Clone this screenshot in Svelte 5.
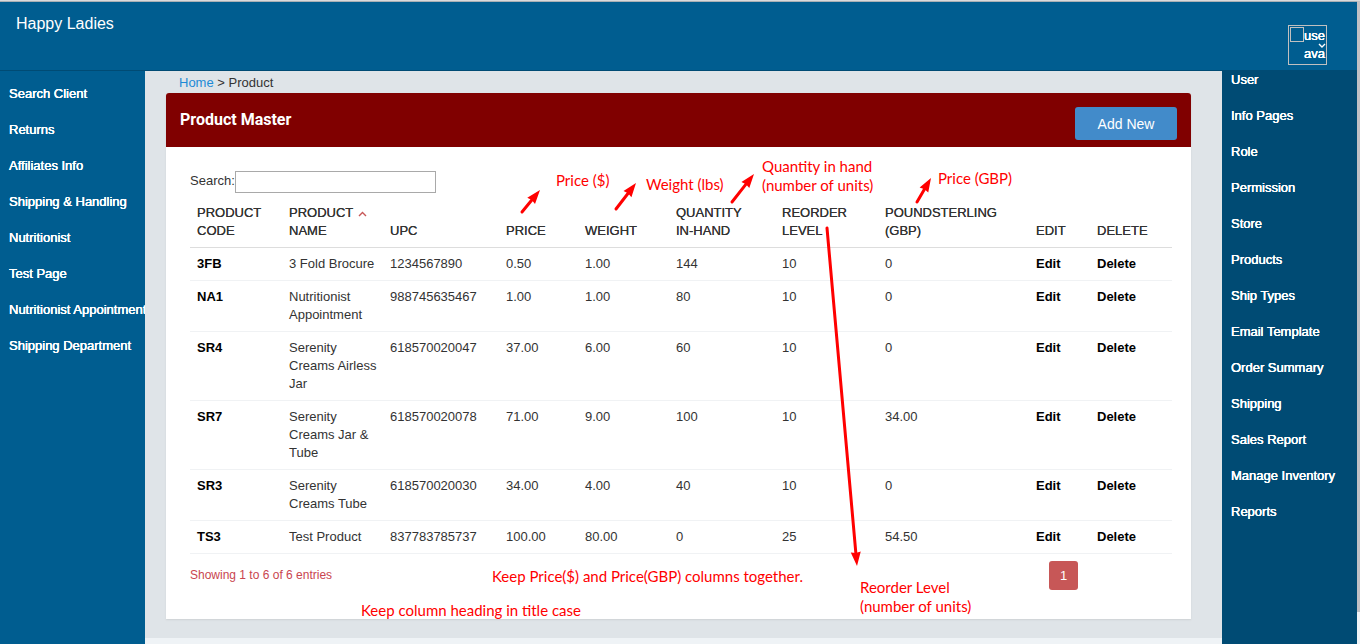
<script>
  const leftLinks = [
    'Search Client',
    'Returns',
    'Affiliates Info',
    'Shipping & Handling',
    'Nutritionist',
    'Test Page',
    'Nutritionist Appointment',
    'Shipping Department',
  ];

  const rightLinks = [
    'User',
    'Info Pages',
    'Role',
    'Permission',
    'Store',
    'Products',
    'Ship Types',
    'Email Template',
    'Order Summary',
    'Shipping',
    'Sales Report',
    'Manage Inventory',
    'Reports',
  ];

  const columns = [
    { lines: ['PRODUCT', 'CODE'], width: 92 },
    { lines: ['PRODUCT', 'NAME'], width: 101, sorted: true },
    { lines: ['UPC'], width: 116 },
    { lines: ['PRICE'], width: 79 },
    { lines: ['WEIGHT'], width: 91 },
    { lines: ['QUANTITY', 'IN-HAND'], width: 106 },
    { lines: ['REORDER', 'LEVEL'], width: 103 },
    { lines: ['POUNDSTERLING', '(GBP)'], width: 151 },
    { lines: ['EDIT'], width: 61 },
    { lines: ['DELETE'], width: 82 },
  ];

  const products = [
    ['3FB', '3 Fold Brocure', '1234567890', '0.50', '1.00', '144', '10', '0'],
    ['NA1', 'Nutritionist Appointment', '988745635467', '1.00', '1.00', '80', '10', '0'],
    ['SR4', 'Serenity Creams Airless Jar', '618570020047', '37.00', '6.00', '60', '10', '0'],
    ['SR7', 'Serenity Creams Jar & Tube', '618570020078', '71.00', '9.00', '100', '10', '34.00'],
    ['SR3', 'Serenity Creams Tube', '618570020030', '34.00', '4.00', '40', '10', '0'],
    ['TS3', 'Test Product', '837783785737', '100.00', '80.00', '0', '25', '54.50'],
  ];

  // Review notes, placed from the card's top left corner.
  const notes = [
    { x: 390, y: 78, lines: ['Price ($)'] },
    { x: 480, y: 82, lines: ['Weight (lbs)'] },
    { x: 596, y: 64, lines: ['Quantity in hand', '(number of units)'] },
    { x: 772, y: 76, lines: ['Price (GBP)'] },
    { x: 326, y: 474, lines: ['Keep Price($) and Price(GBP) columns together.'] },
    { x: 195, y: 508, lines: ['Keep column heading in title case'] },
    { x: 694, y: 485, lines: ['Reorder Level', '(number of units)'] },
  ];

  const arrows = [
    [356, 119, 374, 97],
    [450, 116, 470, 90],
    [566, 109, 588, 81],
    [751, 109, 765, 85],
    [661, 135, 691, 473],
  ];

  // Splits an arrow into its shaft's end and the outline of its head.
  function arrowShape([x1, y1, x2, y2]) {
    const length = Math.hypot(x2 - x1, y2 - y1);
    const ux = (x2 - x1) / length;
    const uy = (y2 - y1) / length;
    const point = (back, side) => [x2 - ux * back - uy * side, y2 - uy * back + ux * side];
    return {
      end: point(11, 0),
      head: [point(0, 0), point(14, 5), point(13, 0), point(14, -5)].join(' '),
    };
  }

  const shapes = arrows.map((arrow) => ({ start: arrow, ...arrowShape(arrow) }));

  let search = $state('');
</script>

<div class="page">
  <header class="topbar">
    <a class="brand" href="#home">Happy Ladies</a>
    <button class="avatar" aria-label="Account menu">
      <span class="missing"></span>
      <span class="alt">use<br />ava</span>
      <svg class="caret" width="8" height="6" viewBox="0 0 8 6"><path d="M1 1 4 4 7 1" /></svg>
    </button>
  </header>

  <div class="body">
    <nav class="side left">
      {#each leftLinks as link}
        <a href="#menu">{link}</a>
      {/each}
    </nav>

    <div class="center">
      <main>
        <div class="crumbs"><a href="#home">Home</a> &gt; Product</div>

        <section class="card">
          <div class="title">
            <h1>Product Master</h1>
            <button class="add">Add New</button>
          </div>

          <div class="content">
            <div class="search">
              <label for="search">Search:</label>
              <input id="search" type="text" bind:value={search} />
            </div>

            <table>
              <colgroup>
                {#each columns as column}
                  <col style="width: {column.width}px" />
                {/each}
              </colgroup>
              <thead>
                <tr>
                  {#each columns as column}
                    <th>
                      {column.lines[0]}{#if column.sorted}<svg class="sort" width="9" height="6" viewBox="0 0 9 6"><path d="M1 5 4.500 1.500 8 5" /></svg>{/if}
                      {#if column.lines[1]}<br />{column.lines[1]}{/if}
                    </th>
                  {/each}
                </tr>
              </thead>
              <tbody>
                {#each products as product}
                  <tr>
                    {#each product as value, i}
                      <td class:strong={i === 0}>{value}</td>
                    {/each}
                    <td class="strong"><a href="#edit">Edit</a></td>
                    <td class="strong"><a href="#delete">Delete</a></td>
                  </tr>
                {/each}
              </tbody>
            </table>

            <div class="foot">
              <span class="count">Showing 1 to 6 of 6 entries</span>
              <button class="pageno">1</button>
            </div>
          </div>

          <svg class="arrows" width="1025" height="526" viewBox="0 0 1025 526">
            {#each shapes as shape}
              <line x1={shape.start[0]} y1={shape.start[1]} x2={shape.end[0]} y2={shape.end[1]} />
              <polygon points={shape.head} />
            {/each}
          </svg>
          {#each notes as note}
            <p class="note" style="left: {note.x}px; top: {note.y}px">
              {note.lines[0]}{#if note.lines[1]}<br />{note.lines[1]}{/if}
            </p>
          {/each}
        </section>
      </main>
    </div>

    <nav class="side right">
      {#each rightLinks as link}
        <a href="#menu">{link}</a>
      {/each}
    </nav>
  </div>
  <div class="scroll"></div>
</div>

<style>
  :global(body) {
    margin: 0;
  }

  .page {
    position: relative;
    display: flex;
    flex-direction: column;
    box-sizing: border-box;
    min-height: 100vh;
    padding-right: 3px;
    border-top: 1px solid #d9dadc;
    background: #eff3f6;
    color: #333;
    font: 13px/18px 'Liberation Sans', Arial, sans-serif;
  }

  a {
    color: inherit;
    text-decoration: none;
  }

  button {
    padding: 0;
    border: 0;
    font: inherit;
    cursor: pointer;
  }

  .topbar {
    display: flex;
    justify-content: space-between;
    align-items: flex-start;
    box-sizing: border-box;
    height: 70px;
    padding: 12px 30px 0 16px;
    border-top: 1px solid #a9b0b5;
    border-bottom: 1px solid #004b74;
    background: #005d90;
    color: #fff;
  }

  .brand {
    font-size: 16px;
    line-height: 20px;
  }

  .avatar {
    position: relative;
    display: flex;
    box-sizing: border-box;
    width: 39px;
    height: 40px;
    margin-top: 11px;
    padding: 1px;
    overflow: hidden;
    border: 1px solid #c0c0c0;
    background: none;
    color: #fff;
    text-align: left;
    text-shadow: 0 0 0 currentColor, 0 0 0 currentColor;
  }

  .missing {
    flex: none;
    box-sizing: border-box;
    width: 14px;
    height: 15px;
    border: 1px solid #c0c0c0;
  }

  .caret {
    position: absolute;
    right: 0;
    top: 17px;
    fill: none;
    stroke: #fff;
    stroke-width: 1.4;
  }

  .body {
    display: flex;
    flex: 1;
  }

  .side {
    display: flex;
    flex-direction: column;
    flex: none;
    gap: 18px;
    box-sizing: border-box;
    padding-left: 9px;
    background: #005d90;
    color: #fff;
    white-space: nowrap;
    text-shadow: 0 0 0 currentColor, 0 0 0 currentColor;
  }

  .left {
    width: 145px;
    padding-top: 14px;
    overflow: hidden;
  }

  .right {
    width: 135px;
    background: #004b74;
  }

  .center {
    flex: 1;
    min-width: 0;
  }

  main {
    padding: 0 31px 19px 21px;
    background: #dfe4e8;
  }

  .crumbs {
    padding: 3px 0 1px 13px;
  }

  .crumbs a {
    color: #1d8ad6;
  }

  .card {
    position: relative;
    border-radius: 3px 3px 0 0;
    background: #fff;
    box-shadow: 0 1px 2px #cdd1d4;
  }

  .title {
    display: flex;
    justify-content: space-between;
    align-items: flex-start;
    padding: 14px 14px 7px;
    border-radius: 3px 3px 0 0;
    background: #800000;
    color: #fff;
  }

  h1 {
    margin: 0;
    font: 700 16px/26px Roboto, sans-serif;
  }

  .add {
    width: 102px;
    height: 33px;
    border-radius: 3px;
    background: #428bca;
    color: #fff;
    font-size: 14px;
  }

  .content {
    padding: 24px 19px 29px 24px;
  }

  .search {
    display: flex;
    align-items: flex-start;
  }

  .search label {
    line-height: 20px;
  }

  .search input {
    box-sizing: border-box;
    width: 201px;
    height: 22px;
    padding: 1px 4px;
    border: 1px solid #a9a9a9;
    background: #fff;
    font: inherit;
  }

  table {
    width: 100%;
    margin-top: 3px;
    border-collapse: separate;
    border-spacing: 0;
    table-layout: fixed;
  }

  th,
  td {
    padding: 7px 2px 7px 7px;
    text-align: left;
    vertical-align: top;
  }

  th {
    padding-top: 8px;
    border-bottom: 1px solid #ddd;
    font-weight: 400;
    vertical-align: bottom;
    text-shadow: 0 0 0 currentColor;
    white-space: nowrap;
  }

  td {
    border-bottom: 1px solid #f0f2f4;
  }

  .strong {
    color: #000;
    font-weight: 700;
  }

  .sort {
    margin-left: 5px;
    fill: none;
    stroke: #c75757;
    stroke-width: 1.4;
  }

  .foot {
    display: flex;
    justify-content: space-between;
    align-items: flex-start;
    padding: 7px 94px 0 0;
  }

  .count {
    padding-top: 5px;
    color: #c9454f;
    font-size: 12px;
  }

  .pageno {
    width: 29px;
    height: 29px;
    border-radius: 3px;
    background: #c75757;
    color: #fff;
  }

  .arrows {
    position: absolute;
    left: 0;
    top: 0;
    fill: #f00;
    stroke: none;
    pointer-events: none;
  }

  .arrows line {
    stroke: #f00;
    stroke-width: 3;
    stroke-linecap: round;
  }

  .note {
    position: absolute;
    margin: 0;
    color: #f00;
    font: 15px/19px Lato, sans-serif;
    white-space: nowrap;
  }

  .scroll {
    position: absolute;
    right: 0;
    top: 0;
    width: 3px;
    height: 95%;
    background: #c1c1c5;
  }
</style>
